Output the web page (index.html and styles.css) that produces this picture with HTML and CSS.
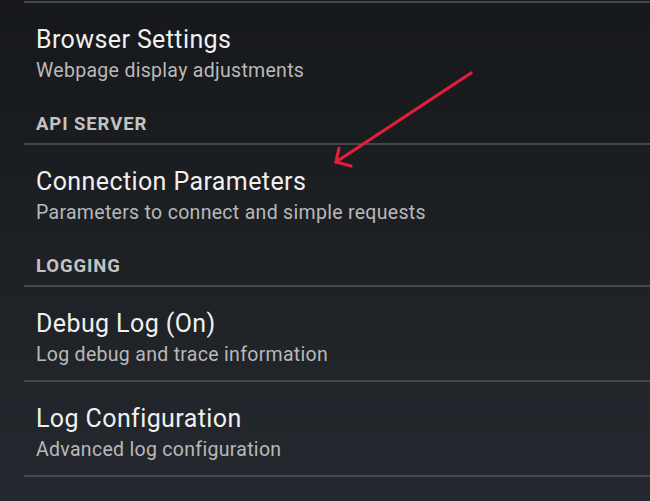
FILE: index.html
```html
<!DOCTYPE html>
<html>
<head>
<meta charset="utf-8">
<link rel="stylesheet" href="styles.css">
</head>
<body>
<div class="screen">
  <div class="list">
    <div class="divider"></div>
    <div class="pref">
      <div class="title">Browser Settings</div>
      <div class="summary">Webpage display adjustments</div>
    </div>
    <div class="category">API SERVER</div>
    <div class="divider"></div>
    <div class="pref">
      <div class="title">Connection Parameters</div>
      <div class="summary">Parameters to connect and simple requests</div>
    </div>
    <div class="category">LOGGING</div>
    <div class="divider"></div>
    <div class="pref">
      <div class="title">Debug Log (On)</div>
      <div class="summary">Log debug and trace information</div>
    </div>
    <div class="divider"></div>
    <div class="pref">
      <div class="title">Log Configuration</div>
      <div class="summary">Advanced log configuration</div>
    </div>
    <div class="divider"></div>
  </div>
  <svg class="arrow" width="650" height="501" viewBox="0 0 650 501">
    <g fill="none" stroke="#e31f37" stroke-width="3.2" stroke-linecap="round" stroke-linejoin="round">
      <path d="M471 73 L336 162"/>
      <path d="M339 148 L336 162 L351 166"/>
    </g>
  </svg>
</div>
</body>
</html>
```
FILE: styles.css
```css
html, body {
  margin: 0;
  padding: 0;
  height: 100%;
}
body {
  background: linear-gradient(180deg, #16181b 0%, #1d2024 50%, #25292f 100%);
  font-family: Roboto, "Noto Sans", sans-serif;
  overflow: hidden;
}
.screen {
  position: relative;
  width: 650px;
  height: 501px;
}
.list {
  padding-top: 1px;
  padding-left: 24px;
}
.divider {
  height: 2px;
  background: #44474b;
}
.pref {
  height: 93px;
  box-sizing: border-box;
  padding: 22px 0 0 12px;
}
.title {
  font-size: 25px;
  line-height: 30px;
  letter-spacing: 0.4px;
  color: #f0f0f0;
}
.summary {
  font-size: 19.5px;
  line-height: 31px;
  letter-spacing: 0.3px;
  color: #b9b9b9;
}
.category {
  height: 47px;
  box-sizing: border-box;
  padding: 16px 0 0 12px;
  font-size: 18.5px;
  line-height: 24px;
  letter-spacing: 0.9px;
  font-weight: bold;
  color: #c3c3c3;
}
.arrow {
  position: absolute;
  left: 0;
  top: 0;
  pointer-events: none;
}
```
